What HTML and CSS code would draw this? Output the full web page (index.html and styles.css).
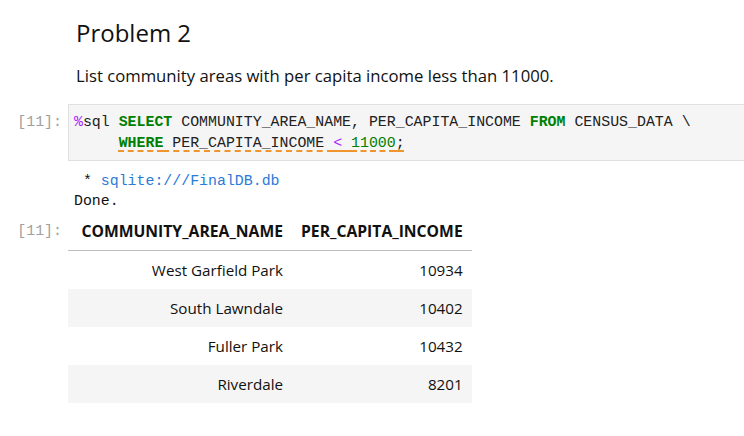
FILE: index.html
```html
<!DOCTYPE html>
<html>
<head>
<meta charset="utf-8">
<link rel="stylesheet" href="styles.css">
</head>
<body>
<div class="notebook">
  <div class="md-cell">
    <h2 class="md-h2">Problem 2</h2>
    <p class="md-p">List community areas with per capita income less than 11000.</p>
  </div>

  <div class="code-cell">
    <div class="prompt">[11]:</div>
    <div class="editor">
      <div class="code-line"><span class="magic">%</span>sql <span class="kw">SELECT</span> COMMUNITY_AREA_NAME, PER_CAPITA_INCOME <span class="kw">FROM</span> CENSUS_DATA \</div>
      <div class="code-line">     <span class="lint"><span class="kw">WHERE</span> PER_CAPITA_INCOME <span class="op">&lt;</span> <span class="num">11000</span>;</span></div>
    </div>
  </div>

  <div class="output-text">
    <div class="out-line"> * <span class="link">sqlite:///FinalDB.db</span></div>
    <div class="out-line">Done.</div>
  </div>

  <div class="output-table">
    <div class="prompt">[11]:</div>
    <table class="result">
      <thead>
        <tr><th class="col-name">COMMUNITY_AREA_NAME</th><th class="col-income">PER_CAPITA_INCOME</th></tr>
      </thead>
      <tbody>
        <tr><td>West Garfield Park</td><td>10934</td></tr>
        <tr><td>South Lawndale</td><td>10402</td></tr>
        <tr><td>Fuller Park</td><td>10432</td></tr>
        <tr><td>Riverdale</td><td>8201</td></tr>
      </tbody>
    </table>
  </div>
</div>
</body>
</html>
```

FILE: styles.css
```css
html, body {
  margin: 0;
  padding: 0;
  background: #ffffff;
}

body {
  font-family: "Open Sans", "Noto Sans", sans-serif;
  color: #1f1f1f;
  width: 744px;
  height: 436px;
  overflow: hidden;
}

.notebook {
  padding-top: 18px;
}

.md-cell {
  padding-left: 76px;
}

.md-h2 {
  margin: 0;
  font-size: 24px;
  font-weight: 400;
  line-height: 30px;
  color: #111111;
}

.md-p {
  margin: 17px 0 0 0;
  font-size: 16.7px;
  line-height: 22px;
  color: #111111;
}

.code-cell {
  display: flex;
  margin-top: 17px;
}

.prompt {
  width: 62px;
  padding-right: 6px;
  text-align: right;
  font-family: "Liberation Mono", "DejaVu Sans Mono", monospace;
  font-size: 14.9px;
  color: #a0a0a0;
  flex: none;
  box-sizing: content-box;
}

.code-cell .prompt {
  padding-top: 8px;
  line-height: 21px;
}

.editor {
  flex: 1;
  margin-right: -2px;
  background: #f5f5f5;
  border: 1px solid #e0e0e0;
  padding: 7px 0 6px 5px;
  font-family: "Liberation Mono", "DejaVu Sans Mono", monospace;
  font-size: 14.9px;
  line-height: 21px;
  color: #212121;
}

.code-line {
  white-space: pre;
}

.magic { color: #aa22ff; }
.kw { color: #008000; font-weight: 700; }
.op { color: #aa22ff; }
.num { color: #008000; }

.lint {
  text-decoration: underline dashed #f0952e;
  text-decoration-thickness: 2px;
  text-underline-offset: 3px;
}

.output-text {
  padding-left: 74px;
  margin-top: 10px;
  font-family: "Liberation Mono", "DejaVu Sans Mono", monospace;
  font-size: 14.9px;
  line-height: 20px;
  color: #111111;
}

.out-line {
  white-space: pre;
}

.link {
  color: #2a7bd6;
}

.output-table {
  display: flex;
  margin-top: 1px;
}

.output-table .prompt {
  padding-top: 9px;
  line-height: 20px;
}

.result {
  border-collapse: collapse;
  font-size: 15.2px;
  color: #111111;
}

.result th,
.result td {
  text-align: right;
  padding: 0 9px;
  height: 38px;
  white-space: nowrap;
}

.result th {
  font-size: 15.7px;
  font-weight: 700;
  border-bottom: 1px solid #bdbdbd;
  vertical-align: middle;
}

.col-name { width: 206px; }
.col-income { width: 161px; }

.result tbody tr:nth-child(even) td {
  background: #f5f5f5;
}
```
